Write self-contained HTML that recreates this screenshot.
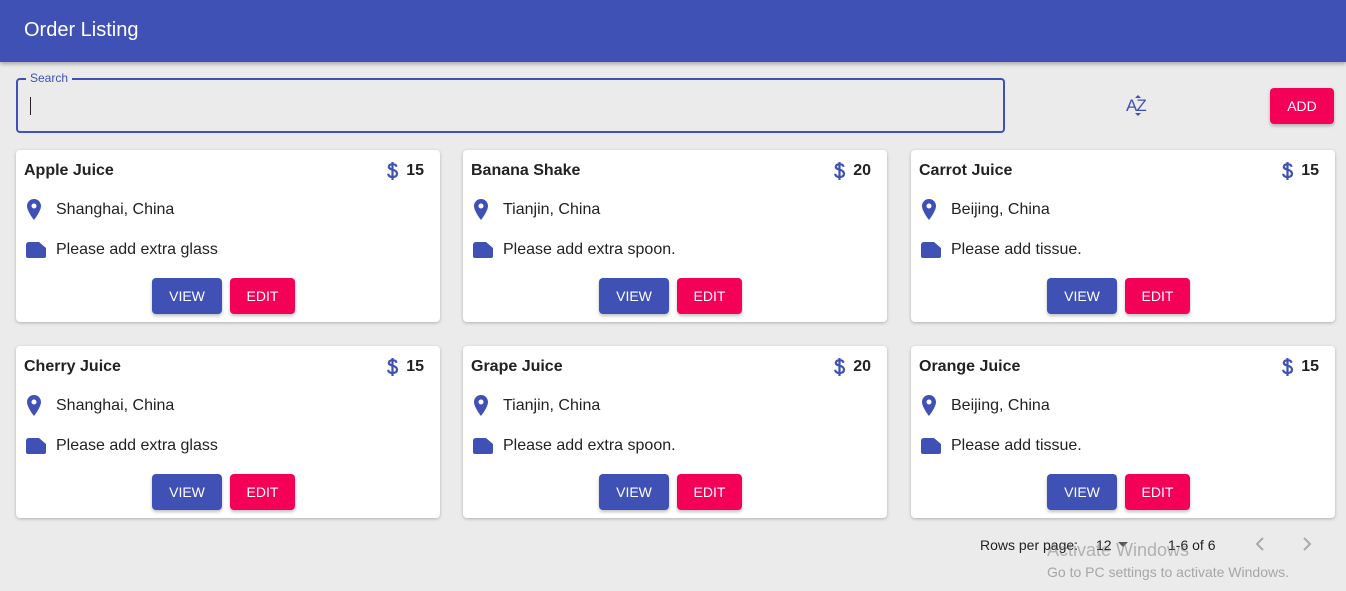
<!DOCTYPE html>
<html><head><style>
*{box-sizing:border-box;margin:0;padding:0}
body{width:1346px;height:591px;background:#ebebeb;font-family:"Liberation Sans",Arial,sans-serif;position:relative;overflow:hidden;color:#222}
.hdr{position:absolute;left:0;top:0;width:1346px;height:62px;background:#3f51b5;box-shadow:0 2px 4px rgba(0,0,0,.3)}
.hdr span{position:absolute;left:24px;top:19px;color:#fff;font-size:20px}
.search{position:absolute;left:16px;top:78px;width:989px;height:55px;border:2px solid #3f51b5;border-radius:4px}
.lbl{position:absolute;left:26px;top:71px;font-size:12px;color:#3f51b5;background:#ebebeb;padding:0 4px}
.caret{position:absolute;left:30px;top:97px;width:1px;height:18px;background:#222}
.btn{position:absolute;height:36px;border-radius:4px;color:#fff;font-size:14px;text-align:center;line-height:36px;box-shadow:0 2px 3px rgba(0,0,0,.25)}
.v{background:#3f51b5}.e{background:#f50057}
.card{position:absolute;width:424px;height:172px;background:#fff;border-radius:4px;box-shadow:0 1px 3px rgba(0,0,0,.25)}
.t{position:absolute;left:8px;top:12px;font-size:16px;font-weight:bold;color:#222}
.p{position:absolute;right:16px;top:12px;font-size:16px;font-weight:bold}
.p svg{position:absolute;left:-20px;top:-1px}
.row{position:absolute;left:40px;font-size:16px;color:#222}
.ic{position:absolute;left:10px}
.pg{position:absolute;top:537px;font-size:14px;color:#222}
</style></head><body>
<div class="hdr"><span>Order Listing</span></div>
<div class="search"></div><div class="lbl">Search</div><div class="caret"></div>
<div style="position:absolute;left:1126px;top:96px;color:#3f51b5;font-size:17px;letter-spacing:-1px">AZ</div>
<svg style="position:absolute;left:1133px;top:94px" width="10" height="24"><path d="M2 4 L5 1 L8 4Z M2 19 L5 22 L8 19Z" fill="#3f51b5"/></svg>
<div class="btn e" style="left:1270px;top:88px;width:64px">ADD</div>
<div id="c"></div>
<div class="pg" style="left:980px">Rows per page:</div>
<div class="pg" style="left:1096px">12</div>
<svg style="position:absolute;left:1118px;top:542px" width="10" height="6"><path d="M0 0L10 0L5 5Z" fill="#555"/></svg>
<div class="pg" style="left:1168px">1-6 of 6</div>
<svg style="position:absolute;left:1254px;top:536px" width="12" height="16"><path d="M9 2L3 8L9 14" stroke="#aaa" stroke-width="2" fill="none"/></svg>
<svg style="position:absolute;left:1301px;top:536px" width="12" height="16"><path d="M3 2L9 8L3 14" stroke="#aaa" stroke-width="2" fill="none"/></svg>
<div style="position:absolute;left:1047px;top:540px;font-size:18px;color:rgba(120,120,120,.5)">Activate Windows</div>
<div style="position:absolute;left:1047px;top:564px;font-size:14px;color:rgba(120,120,120,.6)">Go to PC settings to activate Windows.</div>
<script>
var d=[["Apple Juice",15,"Shanghai, China","Please add extra glass"],["Banana Shake",20,"Tianjin, China","Please add extra spoon."],["Carrot Juice",15,"Beijing, China","Please add tissue."],["Cherry Juice",15,"Shanghai, China","Please add extra glass"],["Grape Juice",20,"Tianjin, China","Please add extra spoon."],["Orange Juice",15,"Beijing, China","Please add tissue."]];
var xs=[16,463,911],ys=[150,346],h="";
d.forEach(function(o,i){h+='<div class="card" style="left:'+xs[i%3]+'px;top:'+ys[Math.floor(i/3)]+'px"><div class="t">'+o[0]+'</div><div class="p"><svg width="13" height="20" viewBox="0 0 13 20"><path d="M10.5 5.8C10.3 4.3 9.2 3.2 6.5 3.2 4.3 3.2 2.8 4.3 2.8 5.8 2.8 7.6 4.6 8.1 6.7 8.7 9 9.3 11 10.1 11 12.8 11 14.8 9.4 16 6.5 16 3.8 16 2.3 14.6 2.1 12.8M6.5 1V19" stroke="#3f51b5" stroke-width="2.2" fill="none"/></svg>'+o[1]+'</div>'+
'<svg class="ic" style="top:48px" width="16" height="23" viewBox="0 0 16 23"><path d="M8 1C4.1 1 1 4.1 1 8c0 5.2 7 14 7 14s7-8.8 7-14c0-3.9-3.1-7-7-7zm0 9.5a2.5 2.5 0 110-5 2.5 2.5 0 010 5z" fill="#3f51b5"/></svg><div class="row" style="top:51px">'+o[2]+'</div>'+
'<svg class="ic" style="top:92px" width="20" height="16" viewBox="0 0 20 16"><path d="M3 0H13L20 6V14Q20 16 18 16H2Q0 16 0 14V3Q0 0 3 0Z" fill="#3f51b5"/></svg><div class="row" style="top:91px">'+o[3]+'</div>'+
'<div class="btn v" style="left:136px;top:128px;width:70px">VIEW</div><div class="btn e" style="left:214px;top:128px;width:65px">EDIT</div></div>';});
document.getElementById("c").innerHTML=h;
</script>
</body></html>
